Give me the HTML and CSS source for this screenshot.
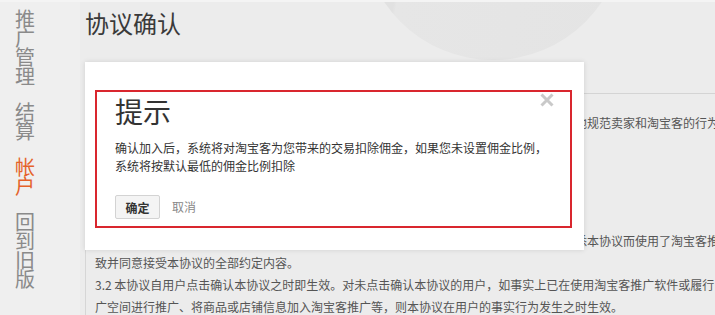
FILE: index.html
```html
<!DOCTYPE html>
<html lang="zh-CN">
<head>
<meta charset="utf-8">
<title>协议确认</title>
<link rel="stylesheet" href="styles.css">
</head>
<body>
<div class="page">
  <nav class="sidebar">
    <a class="nav-item">推广管理</a>
    <a class="nav-item">结算</a>
    <a class="nav-item active">帐户</a>
    <a class="nav-item">回到旧版</a>
  </nav>
  <main class="main">
    <div class="watermark"></div>
    <h1 class="page-title">协议确认</h1>
    <div class="rule"></div>
    <div class="agreement">
      <p class="line">淘宝客推广软件服务协议旨在明确淘宝网、卖家及淘宝客之间的权利义务关系，并为了更好地规范卖家和淘宝客的行为，维护各方的合法权益。</p>
      <p class="line gap">如您在阅读本协议后仍继续使用淘宝客推广软件服务，或您虽未点击确认同意但实际已经知悉本协议而使用了淘宝客推广软件的，即视为您已阅读</p>
      <p class="line">致并同意接受本协议的全部约定内容。</p>
      <p class="line">3.2 本协议自用户点击确认本协议之时即生效。对未点击确认本协议的用户，如事实上已在使用淘宝客推广软件或履行</p>
      <p class="line">广空间进行推广、将商品或店铺信息加入淘宝客推广等，则本协议在用户的事实行为发生之时生效。</p>
    </div>
  </main>
</div>

<div class="modal">
  <div class="modal-box">
    <button class="close" aria-label="关闭">
      <svg width="14" height="14" viewBox="0 0 14 14"><path d="M1.5 1.5 L12.5 12.5 M12.5 1.5 L1.5 12.5" stroke="#c9c9c9" stroke-width="3" stroke-linecap="butt"/></svg>
    </button>
    <h2 class="modal-title">提示</h2>
    <p class="modal-text">确认加入后，系统将对淘宝客为您带来的交易扣除佣金，如果您未设置佣金比例，<br>系统将按默认最低的佣金比例扣除</p>
    <div class="modal-actions">
      <button class="btn-ok">确定</button>
      <a class="btn-cancel">取消</a>
    </div>
  </div>
</div>
</body>
</html>
```

FILE: styles.css
```css
* { box-sizing: border-box; }
html, body { margin: 0; padding: 0; }
body {
  width: 715px;
  height: 315px;
  overflow: hidden;
  background: #ececec;
  font-family: "Noto Sans CJK SC", "Noto Sans", sans-serif;
  color: #333;
  position: relative;
}
.page {
  display: flex;
  height: 315px;
  border-top: 2px solid #f4f4f4;
}
.sidebar {
  width: 80px;
  flex: none;
  background: #efefef;
  padding: 7px 0 0 15px;
  display: flex;
  flex-direction: column;
  gap: 17px;
}
.nav-item {
  display: block;
  width: 20px;
  font-size: 20px;
  line-height: 19px;
  color: #8a8a8a;
  word-break: break-all;
}
.nav-item.active { color: #e5622a; }

.main {
  flex: 1;
  position: relative;
  overflow: hidden;
  padding-left: 5px;
}
.watermark {
  position: absolute;
  left: 282px;
  top: -204px;
  width: 262px;
  height: 262px;
  border-radius: 50%;
  background: linear-gradient(100deg, #e1e1e1 0%, #e1e1e1 22%, #e6e6e6 23%, #e4e4e4 100%);
}
.page-title {
  position: relative;
  margin: 5px 0 0;
  font-size: 24px;
  line-height: 32px;
  font-weight: normal;
  color: #3a3a3a;
}
.rule {
  position: relative;
  height: 1px;
  background: #d4d4d4;
  margin-top: 54px;
}
.agreement {
  position: relative;
  border-left: 1px solid #d6d6d6;
  padding: 18px 0 0 9px;
  height: 230px;
}
.line {
  margin: 0;
  font-size: 12px;
  line-height: 22px;
  color: #555;
  white-space: nowrap;
}
.line.gap { margin-top: 96px; }

.modal {
  position: absolute;
  left: 85px;
  top: 62px;
  width: 499px;
  height: 188px;
  background: #fff;
  box-shadow: 0 0 5px rgba(0,0,0,0.12);
  padding: 28px 12px 0 10px;
}
.modal-box {
  position: relative;
  height: 138px;
  border: 2px solid #d9262e;
  padding: 3px 0 0 18px;
}
.close {
  position: absolute;
  right: 16px;
  top: 1px;
  width: 14px;
  height: 14px;
  padding: 0;
  border: 0;
  background: none;
  display: flex;
}
.modal-title {
  margin: 0;
  font-size: 28px;
  line-height: 32px;
  font-weight: normal;
  color: #333;
}
.modal-text {
  margin: 12px 0 0;
  font-size: 12px;
  line-height: 18px;
  color: #333;
}
.modal-actions {
  margin-top: 20px;
  display: flex;
  align-items: center;
  gap: 12px;
}
.btn-ok {
  width: 45px;
  height: 24px;
  padding: 0;
  border: 1px solid #d3d3d3;
  border-radius: 2px;
  background: #f4f4f4;
  font-family: inherit;
  font-size: 12px;
  font-weight: bold;
  color: #333;
}
.btn-cancel {
  font-size: 12px;
  line-height: 24px;
  color: #888;
}
```
